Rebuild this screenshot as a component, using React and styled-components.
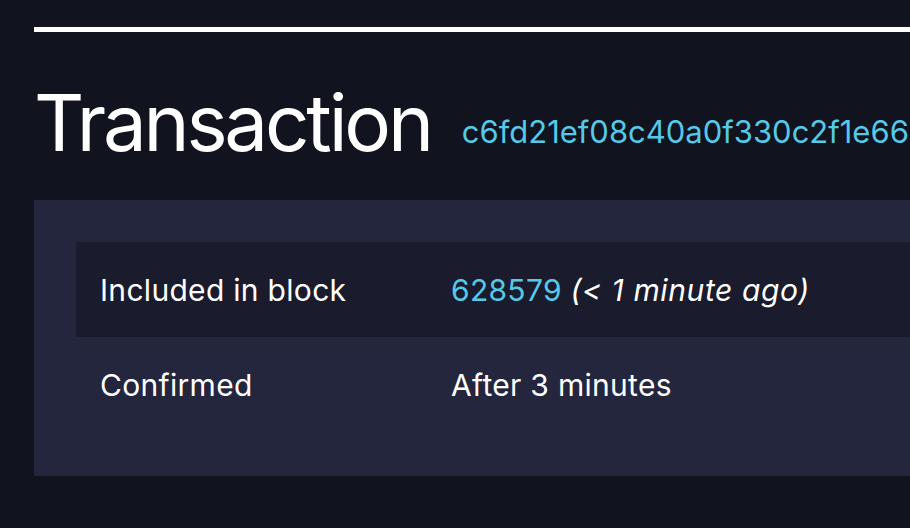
import React from "react";
import styled, { createGlobalStyle } from "styled-components";

const Global = createGlobalStyle`
  html, body { margin: 0; padding: 0; background: #11131f; overflow: hidden; }
  body { font-family: Inter, "Liberation Sans", sans-serif; color: #fff; }
`;

const Page = styled.div`
  width: 910px;
  height: 528px;
  padding: 27px 0 0 34px;
  box-sizing: border-box;
  overflow: hidden;
`;

const TopRule = styled.div`
  height: 5px;
  background: #ffffff;
  width: 2000px;
`;

const Header = styled.div`
  display: flex;
  align-items: baseline;
  white-space: nowrap;
  margin-top: 45px;
  height: 123px;
`;

const Title = styled.h1`
  margin: 0 0 0 0;
  font-size: 78px;
  font-weight: 400;
  line-height: 92px;
  letter-spacing: -3.2px;
`;

const Hash = styled.a`
  margin-left: 31px;
  color: #56c9e8;
  font-size: 31px;
  letter-spacing: 0px;
  text-decoration: none;
  position: relative;
  top: -8px;
`;

const Panel = styled.div`
  background: #24263d;
  width: 2000px;
  padding: 42px 0 44px 42px;
  box-sizing: border-box;
`;

const Row = styled.div`
  display: flex;
  align-items: center;
  height: 95px;
  padding-left: 24px;
  font-size: 30px;
  letter-spacing: 0.3px;
  background: ${(p) => (p.$striped ? "#1a1c2d" : "transparent")};
`;

const Label = styled.div`
  width: 351px;
  flex: none;
`;

const Value = styled.div`
  white-space: nowrap;
`;

const Link = styled.a`
  color: #56c9e8;
  text-decoration: none;
`;

const Ago = styled.i`
  font-style: italic;
  letter-spacing: 0.6px;
`;

export default function App() {
  return (
    <>
      <Global />
      <Page>
        <TopRule />
        <Header>
          <Title>Transaction</Title>
          <Hash href="#">c6fd21ef08c40a0f330c2f1e66</Hash>
        </Header>
        <Panel>
          <Row $striped>
            <Label>Included in block</Label>
            <Value>
              <Link href="#">628579</Link> <Ago>(&lt; 1 minute ago)</Ago>
            </Value>
          </Row>
          <Row>
            <Label>Confirmed</Label>
            <Value>After 3 minutes</Value>
          </Row>
        </Panel>
      </Page>
    </>
  );
}
